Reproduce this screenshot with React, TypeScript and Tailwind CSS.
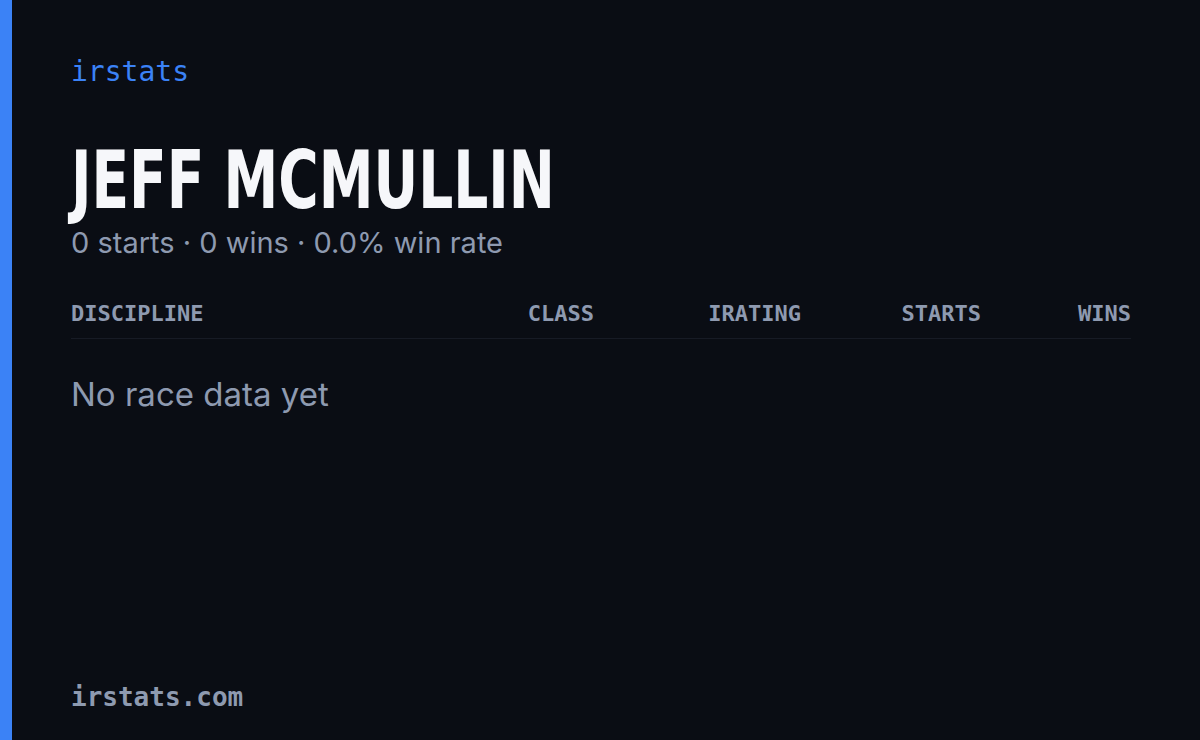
export default function App() {
  const columns = [
    { label: 'CLASS', width: 'w-[180px]' },
    { label: 'IRATING', width: 'w-[207px]' },
    { label: 'STARTS', width: 'w-[180px]' },
    { label: 'WINS', width: 'w-[150px]' },
  ];

  return (
    <div className="flex h-[740px] w-[1200px] bg-[#0a0d14]">
      {/* accent bar */}
      <div className="w-[12px] shrink-0 bg-[#3b82f6]" />

      <div className="flex flex-1 flex-col pl-[59px] pr-[69px] pt-[52px] pb-[25px]">
        <div className="font-['DejaVu_Sans_Mono',monospace] text-[28px] leading-[40px] text-[#3b82f6]">
          irstats
        </div>

        {/* Name */}
        <h1 className="mt-[47px] h-[84px] overflow-visible whitespace-nowrap font-['DejaVu_Sans_Condensed','Liberation_Sans_Narrow',sans-serif] text-[80px] font-bold leading-[84px] text-[#f6f7fa]">
          <span className="inline-block origin-left scale-x-[0.765]">JEFF MCMULLIN</span>
        </h1>
        <p className="mt-[2px] font-['Inter',sans-serif] text-[29px] leading-[36px] text-[#8e9ab0]">
          0 starts · 0 wins · 0.0% win rate
        </p>

        {/* Table header */}
        <div className="mt-[39px] flex items-center border-b border-[#171b25] pb-[10px] font-['DejaVu_Sans_Mono',monospace] text-[22px] font-bold leading-[28px] text-[#8e9ab0]">
          <div className="flex-1">DISCIPLINE</div>
          {columns.map((c) => (
            <div key={c.label} className={`${c.width} text-right`}>
              {c.label}
            </div>
          ))}
        </div>

        <p className="mt-[35px] font-['Inter',sans-serif] text-[33px] leading-[40px] text-[#8e9ab0]">
          No race data yet
        </p>

        <div className="mt-auto font-['DejaVu_Sans_Mono',monospace] text-[26px] font-bold leading-[36px] text-[#8e9ab0]">
          irstats.com
        </div>
      </div>
    </div>
  );
}
